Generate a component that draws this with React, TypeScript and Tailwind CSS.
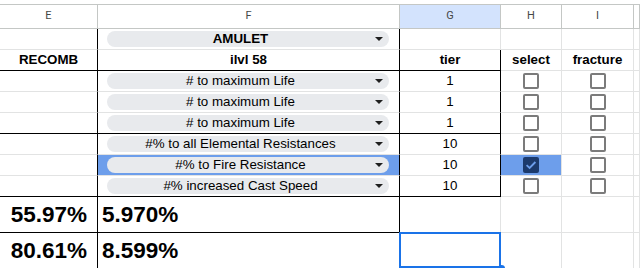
import React from "react";

type Bd = "g" | "k";

function Cell({
  r = "g",
  b = "g",
  bg = "",
  cls = "",
  children,
}: {
  r?: Bd;
  b?: Bd;
  bg?: string;
  cls?: string;
  children?: React.ReactNode;
}) {
  return (
    <div
      className={`relative flex min-w-0 border-r border-b ${
        r === "k" ? "border-r-black" : "border-r-[#e2e3e3]"
      } ${b === "k" ? "border-b-black" : "border-b-[#e2e3e3]"} ${bg} ${cls}`}
    >
      {children}
    </div>
  );
}

function Head({ label, active = false }: { label: string; active?: boolean }) {
  return (
    <div
      className={`flex items-center justify-center border-r border-b border-[#c4c7c5] text-[11px] text-[#444746] ${
        active ? "bg-[#d3e3fd]" : "bg-white"
      }`}
      style={{ fontFamily: "Roboto, 'Liberation Sans', sans-serif" }}
    >
      {label}
    </div>
  );
}

function Chip({ text, bold = false }: { text: string; bold?: boolean }) {
  return (
    <div className="ml-[9px] mr-[10px] flex h-4 flex-1 items-center self-center rounded-full bg-[#e8eaed]">
      <span
        className={`flex-1 whitespace-nowrap text-center text-[13.33px] leading-4 text-black ${
          bold ? "font-bold" : ""
        }`}
      >
        {text}
      </span>
      <svg width="8" height="4" viewBox="0 0 8 4" className="ml-px mr-[6px] shrink-0">
        <path d="M0 0H8L4 4Z" fill="#1f1f1f" />
      </svg>
    </div>
  );
}

function Box({ checked = false }: { checked?: boolean }) {
  if (checked) {
    return (
      <div className="flex h-4 w-4 items-center justify-center rounded-[2px] bg-[#1c3a6c]">
        <svg width="14" height="14" viewBox="0 0 14 14">
          <path d="M2.6 7.2L5.6 10L11.4 4" stroke="#6d9eeb" strokeWidth="1.8" fill="none" />
        </svg>
      </div>
    );
  }
  return <div className="h-4 w-4 rounded-[2px] border-2 border-[#7b7b7b]" />;
}

const T = "items-center justify-center text-[13.33px] text-black";

export default function App() {
  const mods: { text: string; tier: string; blue?: boolean; k?: boolean }[] = [
    { text: "# to maximum Life", tier: "1" },
    { text: "# to maximum Life", tier: "1" },
    { text: "# to maximum Life", tier: "1", k: true },
    { text: "#% to all Elemental Resistances", tier: "10" },
    { text: "#% to Fire Resistance", tier: "10", blue: true },
    { text: "#% increased Cast Speed", tier: "10", k: true },
  ];
  return (
    <div
      className="h-[268px] w-[640px] overflow-hidden bg-white"
      style={{ fontFamily: "'Liberation Sans', Arial, sans-serif" }}
    >
      <div className="grid grid-cols-[98px_302px_101px_61px_72px_1fr] grid-rows-[5px_24px_repeat(8,21px)_36px_36px]">
        <div className="col-span-6 border-b border-[#c4c7c5]" />
        <Head label="E" />
        <Head label="F" />
        <Head label="G" active />
        <Head label="H" />
        <Head label="I" />
        <Head label="" />

        {/* row 1 */}
        <Cell r="k" />
        <Cell r="k">
          <Chip text="AMULET" bold />
        </Cell>
        <Cell />
        <Cell />
        <Cell />
        <Cell />

        {/* row 2 */}
        <Cell r="k" b="k" cls={`${T} font-bold`}>RECOMB</Cell>
        <Cell r="k" b="k" cls={`${T} font-bold`}>ilvl 58</Cell>
        <Cell r="k" b="k" cls={`${T} font-bold`}>tier</Cell>
        <Cell cls={`${T} font-bold`}>select</Cell>
        <Cell cls={`${T} font-bold`}>fracture</Cell>
        <Cell />

        {mods.map((m, i) => (
          <React.Fragment key={i}>
            <Cell r="k" b={m.k ? "k" : "g"} />
            <Cell r="k" b={m.k ? "k" : "g"} bg={m.blue ? "bg-[#6d9eeb]" : ""}>
              <Chip text={m.text} />
            </Cell>
            <Cell r="k" b={m.k ? "k" : "g"} cls={T}>
              {m.tier}
            </Cell>
            <Cell bg={m.blue ? "bg-[#6d9eeb]" : ""} cls="items-center justify-center">
              <Box checked={m.blue} />
            </Cell>
            <Cell cls="items-center justify-center">
              <Box />
            </Cell>
            <Cell />
          </React.Fragment>
        ))}

        {/* big rows */}
        <Cell r="k" b="k" cls="items-center justify-end pr-[10px] text-[22.5px] font-bold text-black">
          55.97%
        </Cell>
        <Cell r="k" b="k" cls="items-center justify-start pl-[4px] text-[22.5px] font-bold text-black">
          5.970%
        </Cell>
        <Cell />
        <Cell />
        <Cell />
        <Cell />

        <Cell r="k" cls="items-center justify-end pr-[10px] text-[22.5px] font-bold text-black">
          80.61%
        </Cell>
        <Cell r="k" cls="items-center justify-start pl-[4px] text-[22.5px] font-bold text-black">
          8.599%
        </Cell>
        <Cell>
          <div className="absolute -left-px -right-px -top-px bottom-0 border-2 border-[#1a73e8]" />
          <div className="absolute -bottom-[4px] -right-[5px] h-[7px] w-[7px] rounded-full bg-[#1a73e8]" />
        </Cell>
        <Cell />
        <Cell />
        <Cell />
      </div>
    </div>
  );
}
